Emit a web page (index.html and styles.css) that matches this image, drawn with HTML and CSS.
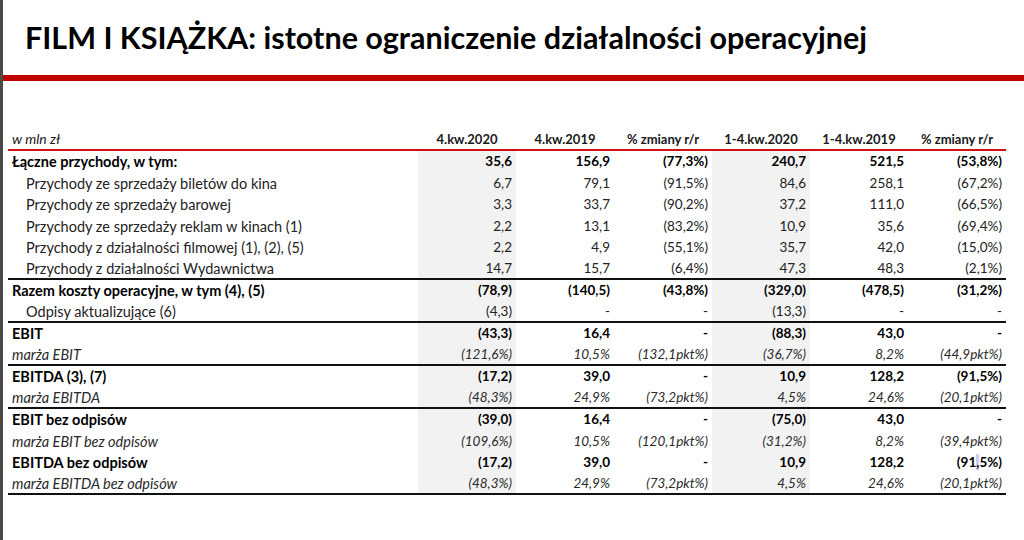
FILE: index.html
```html
<!DOCTYPE html>
<html lang="pl">
<head>
<meta charset="utf-8">
<title>FILM I KSIĄŻKA</title>
<link rel="stylesheet" href="styles.css">
</head>
<body>
<div class="slide">
  <header class="head">
    <h1 class="title">FILM I KSIĄŻKA: istotne ograniczenie działalności operacyjnej</h1>
  </header>
  <div class="redbar"></div>
  <table class="fin">
    <colgroup>
      <col class="c-label"><col class="c-num shade"><col class="c-num"><col class="c-num"><col class="c-num shade"><col class="c-num"><col class="c-num">
    </colgroup>
    <thead>
      <tr>
        <th class="unit">w mln zł</th>
        <th>4.kw.2020</th><th>4.kw.2019</th><th>% zmiany r/r</th>
        <th>1-4.kw.2020</th><th>1-4.kw.2019</th><th>% zmiany r/r</th>
      </tr>
    </thead>
    <tbody>
      <tr class="bold"><td>Łączne przychody, w tym:</td><td class="g">35,6</td><td>156,9</td><td>(77,3%)</td><td class="g">240,7</td><td>521,5</td><td>(53,8%)</td></tr>
      <tr class="sub"><td>Przychody ze sprzedaży biletów do kina</td><td class="g">6,7</td><td>79,1</td><td>(91,5%)</td><td class="g">84,6</td><td>258,1</td><td>(67,2%)</td></tr>
      <tr class="sub"><td>Przychody ze sprzedaży barowej</td><td class="g">3,3</td><td>33,7</td><td>(90,2%)</td><td class="g">37,2</td><td>111,0</td><td>(66,5%)</td></tr>
      <tr class="sub"><td>Przychody ze sprzedaży reklam w kinach (1)</td><td class="g">2,2</td><td>13,1</td><td>(83,2%)</td><td class="g">10,9</td><td>35,6</td><td>(69,4%)</td></tr>
      <tr class="sub"><td>Przychody z działalności filmowej (1), (2), (5)</td><td class="g">2,2</td><td>4,9</td><td>(55,1%)</td><td class="g">35,7</td><td>42,0</td><td>(15,0%)</td></tr>
      <tr class="sub end"><td>Przychody z działalności Wydawnictwa</td><td class="g">14,7</td><td>15,7</td><td>(6,4%)</td><td class="g">47,3</td><td>48,3</td><td>(2,1%)</td></tr>
      <tr class="bold"><td>Razem koszty operacyjne, w tym (4), (5)</td><td class="g">(78,9)</td><td>(140,5)</td><td>(43,8%)</td><td class="g">(329,0)</td><td>(478,5)</td><td>(31,2%)</td></tr>
      <tr class="sub end"><td>Odpisy aktualizujące (6)</td><td class="g">(4,3)</td><td>-</td><td>-</td><td class="g">(13,3)</td><td>-</td><td>-</td></tr>
      <tr class="bold"><td>EBIT</td><td class="g">(43,3)</td><td>16,4</td><td>-</td><td class="g">(88,3)</td><td>43,0</td><td>-</td></tr>
      <tr class="it end"><td>marża EBIT</td><td class="g">(121,6%)</td><td>10,5%</td><td>(132,1pkt%)</td><td class="g">(36,7%)</td><td>8,2%</td><td>(44,9pkt%)</td></tr>
      <tr class="bold"><td>EBITDA (3), (7)</td><td class="g">(17,2)</td><td>39,0</td><td>-</td><td class="g">10,9</td><td>128,2</td><td>(91,5%)</td></tr>
      <tr class="it end"><td>marża EBITDA</td><td class="g">(48,3%)</td><td>24,9%</td><td>(73,2pkt%)</td><td class="g">4,5%</td><td>24,6%</td><td>(20,1pkt%)</td></tr>
      <tr class="bold"><td>EBIT bez odpisów</td><td class="g">(39,0)</td><td>16,4</td><td>-</td><td class="g">(75,0)</td><td>43,0</td><td>-</td></tr>
      <tr class="it"><td>marża EBIT bez odpisów</td><td class="g">(109,6%)</td><td>10,5%</td><td>(120,1pkt%)</td><td class="g">(31,2%)</td><td>8,2%</td><td>(39,4pkt%)</td></tr>
      <tr class="bold"><td>EBITDA bez odpisów</td><td class="g">(17,2)</td><td>39,0</td><td>-</td><td class="g">10,9</td><td>128,2</td><td>(91<span class="sel">,</span>5%)</td></tr>
      <tr class="it end"><td>marża EBITDA bez odpisów</td><td class="g">(48,3%)</td><td>24,9%</td><td>(73,2pkt%)</td><td class="g">4,5%</td><td>24,6%</td><td>(20,1pkt%)</td></tr>
    </tbody>
  </table>
</div>
</body>
</html>
```
FILE: styles.css
```css
html, body {
  margin: 0;
  padding: 0;
  background: #ffffff;
}
body {
  font-family: Lato, "Liberation Sans", sans-serif;
  color: #1a1a1a;
}
.slide {
  width: 1021px;
  height: 540px;
  border-left: 3px solid #4a4a4a;
  overflow: hidden;
}
.head {
  height: 75px;
  display: flex;
  align-items: flex-start;
  padding-left: 22px;
}
.title {
  margin: 0;
  padding-top: 18px;
  font-size: 30.5px;
  line-height: 38px;
  font-weight: 700;
  color: #000;
  letter-spacing: 0;
}
.redbar {
  height: 6px;
  background: #c00000;
}
.fin {
  margin: 47px 0 0 5px;
  border-collapse: collapse;
  table-layout: fixed;
  width: 998px;
  font-size: 13.5px;
}
.c-label { width: 410px; }
.c-num { width: 98px; }
.fin th {
  height: 21px;
  padding: 0;
  font-weight: 700;
  font-size: 13px;
  text-align: center;
  vertical-align: middle;
  border-bottom: 2px solid #d01010;
  color: #1a1a1a;
}
.fin th.unit {
  text-align: left;
  font-style: italic;
  font-weight: 400;
  font-size: 14px;
  padding-left: 4px;
}
.fin td {
  height: 21.5px;
  padding: 0 4px 0 0;
  text-align: right;
  vertical-align: middle;
  white-space: nowrap;
  line-height: 17px;
}
.fin td:first-child {
  text-align: left;
  padding-left: 4px;
  font-size: 14.5px;
}
.fin td.g { background: #f2f2f2; }
.fin tr.bold td { font-weight: 700; color: #000; }
.fin tr.sub td:first-child { padding-left: 18px; }
.fin tr.sub td { color: #222; }
.fin tr.it td { font-style: italic; color: #2a2a2a; }
.fin tr.end td {
  height: 19.5px;
  border-bottom: 2px solid #111;
}
.sel { background: #c9cff2; }
```
